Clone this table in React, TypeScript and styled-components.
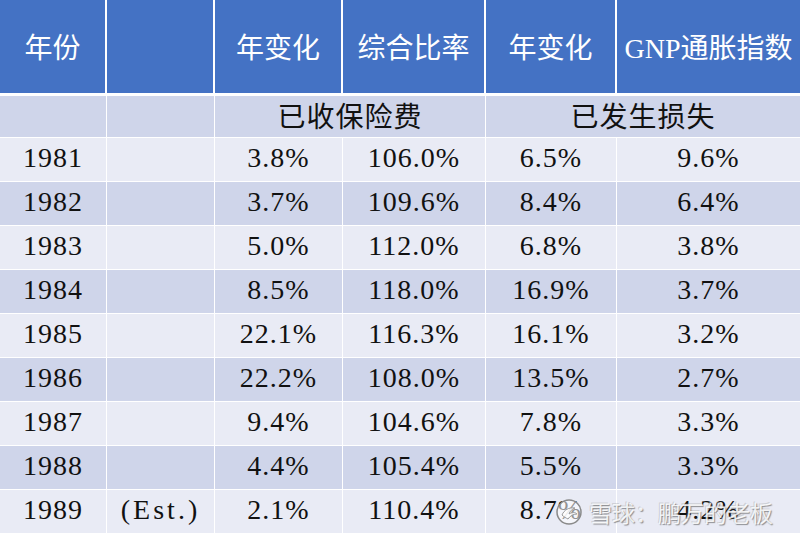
import styled, { createGlobalStyle } from 'styled-components';

const GlobalStyle = createGlobalStyle`
  body {
    margin: 0;
    background: #ffffff;
  }
`;

type Row = {
  year: string;
  note?: string;
  premiumChange: string;
  combinedRatio: string;
  lossChange: string;
  gnpIndex: string;
};

const rows: Row[] = [
  { year: '1981', premiumChange: '3.8%', combinedRatio: '106.0%', lossChange: '6.5%', gnpIndex: '9.6%' },
  { year: '1982', premiumChange: '3.7%', combinedRatio: '109.6%', lossChange: '8.4%', gnpIndex: '6.4%' },
  { year: '1983', premiumChange: '5.0%', combinedRatio: '112.0%', lossChange: '6.8%', gnpIndex: '3.8%' },
  { year: '1984', premiumChange: '8.5%', combinedRatio: '118.0%', lossChange: '16.9%', gnpIndex: '3.7%' },
  { year: '1985', premiumChange: '22.1%', combinedRatio: '116.3%', lossChange: '16.1%', gnpIndex: '3.2%' },
  { year: '1986', premiumChange: '22.2%', combinedRatio: '108.0%', lossChange: '13.5%', gnpIndex: '2.7%' },
  { year: '1987', premiumChange: '9.4%', combinedRatio: '104.6%', lossChange: '7.8%', gnpIndex: '3.3%' },
  { year: '1988', premiumChange: '4.4%', combinedRatio: '105.4%', lossChange: '5.5%', gnpIndex: '3.3%' },
  { year: '1989', note: '(Est.)', premiumChange: '2.1%', combinedRatio: '110.4%', lossChange: '8.7%', gnpIndex: '4.2%' },
];

const headers = ['年份', '', '年变化', '综合比率', '年变化', 'GNP通胀指数'];

const App = () => (
  <>
    <GlobalStyle />
    <StyledPage>
      <StyledTable>
        {headers.map((label, i) => (
          <StyledHeadCell key={`h-${i}`}>{label}</StyledHeadCell>
        ))}
        <StyledCell $shade="dark" />
        <StyledCell $shade="dark" />
        <StyledCell $shade="dark" $span={2}>已收保险费</StyledCell>
        <StyledCell $shade="dark" $span={2}>已发生损失</StyledCell>
        {rows.map((row, i) => {
          const shade = i % 2 === 0 ? 'light' : 'dark';
          return [
            <StyledCell key={`${row.year}-y`} $shade={shade}>{row.year}</StyledCell>,
            <StyledCell key={`${row.year}-n`} $shade={shade} $spaced>{row.note}</StyledCell>,
            <StyledCell key={`${row.year}-p`} $shade={shade}>{row.premiumChange}</StyledCell>,
            <StyledCell key={`${row.year}-c`} $shade={shade}>{row.combinedRatio}</StyledCell>,
            <StyledCell key={`${row.year}-l`} $shade={shade}>{row.lossChange}</StyledCell>,
            <StyledCell key={`${row.year}-g`} $shade={shade}>{row.gnpIndex}</StyledCell>,
          ];
        })}
      </StyledTable>
      <StyledWatermark>
        <svg width="28" height="28" viewBox="0 0 28 28">
          <circle cx="14" cy="14" r="12" fill="rgba(255,255,255,0.55)" stroke="#8a8a8a" strokeWidth="1.5" />
          <path d="M7 17c2-5 7-8 13-7-3 1-5 3-6 6 3-2 6-2 8 0-4 0-7 2-9 5-2-1-4-2-6-4z" fill="rgba(255,255,255,0.8)" stroke="#9a9a9a" strokeWidth="1" />
        </svg>
        <StyledWatermarkText>雪球：鹏万的老板</StyledWatermarkText>
      </StyledWatermark>
    </StyledPage>
  </>
);

const StyledPage = styled.div`
  position: relative;
  width: 800px;
  height: 533px;
  overflow: hidden;
  background: #ffffff;
  font-family: "Liberation Serif", "Noto Sans CJK SC", serif;
`;

const StyledTable = styled.div`
  display: grid;
  grid-template-columns: 106px 107px 127px 142px 130px 183px;
  grid-template-rows: 95px 41px repeat(9, 43px);
  column-gap: 1px;
  row-gap: 1px;
  background: #ffffff;
`;

const StyledHeadCell = styled.div`
  display: flex;
  align-items: center;
  justify-content: center;
  background: #4472c4;
  background-clip: padding-box;
  color: #ffffff;
  font-size: 28px;
  padding-bottom: 2px;
  border-bottom: 2px solid #ffffff;
  border-right: 1px solid #ffffff;
  &:nth-child(6) {
    border-right: none;
  }
`;

const StyledCell = styled.div<{ $shade?: 'light' | 'dark'; $span?: number; $spaced?: boolean }>`
  display: flex;
  align-items: center;
  justify-content: center;
  grid-column: span ${({ $span }) => $span ?? 1};
  padding-bottom: 3px;
  background: ${({ $shade }) => ($shade === 'dark' ? '#cfd5ea' : '#e9ebf5')};
  color: #111111;
  font-size: 28px;
  letter-spacing: ${({ $spaced }) => ($spaced ? '3px' : '1px')};
`;

const StyledWatermark = styled.div`
  position: absolute;
  left: 555px;
  top: 495px;
  display: flex;
  align-items: center;
  gap: 6px;
`;

const StyledWatermarkText = styled.span`
  font-family: "Noto Sans CJK SC", sans-serif;
  font-size: 23px;
  color: rgba(255, 255, 255, 0.85);
  text-shadow: 1px 1px 1px rgba(80, 80, 80, 0.6), -1px -1px 0 rgba(140, 140, 140, 0.3);
  letter-spacing: 0;
`;

export default App;
